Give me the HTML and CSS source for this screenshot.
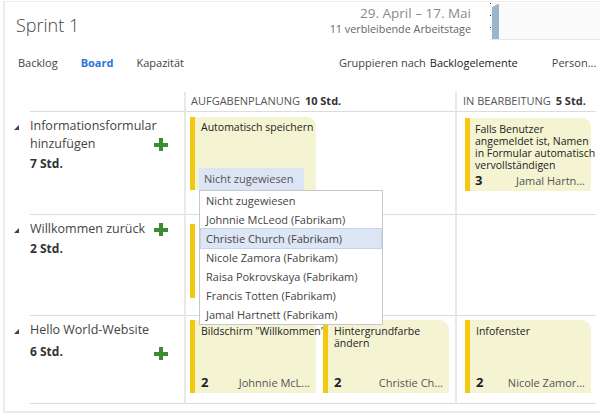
FILE: index.html
```html
<!DOCTYPE html>
<html lang="de">
<head>
<meta charset="utf-8">
<title>Sprint 1</title>
<link rel="stylesheet" href="styles.css">
</head>
<body>
<div class="frame">
  <header class="top">
    <h1 class="title">Sprint 1</h1>
    <div class="sprint-info">
      <div class="dates">
        <div class="range">29. April – 17. Mai</div>
        <div class="remaining">11 verbleibende Arbeitstage</div>
      </div>
      <div class="chart">
        <svg width="110" height="37" viewBox="0 0 110 37">
          <line x1="0.5" y1="0" x2="0.5" y2="37" stroke="#333" stroke-width="1" stroke-dasharray="1 11"/>
          <polygon points="2,37 2,4 4,3 6,2 8,1 9,1 9,37" fill="#9bb6ca"/>
          <line x1="0" y1="36.5" x2="110" y2="36.5" stroke="#e6e6e6"/>
        </svg>
      </div>
    </div>
  </header>

  <nav class="tabs">
    <div class="tab-list">
      <span class="tab">Backlog</span>
      <span class="tab active">Board</span>
      <span class="tab">Kapazität</span>
    </div>
    <div class="options">
      <span class="opt-label">Gruppieren nach</span>
      <span class="opt-value">Backlogelemente</span>
      <span class="opt-person">Person...</span>
    </div>
  </nav>

  <div class="board">
    <div class="toggle head"></div>
    <div class="lane head line"></div>
    <div class="col head line sep"><span class="col-name">Aufgabenplanung</span> <b>10 Std.</b></div>
    <div class="col head line sep col-r"><span class="col-name">In Bearbeitung</span> <b>5 Std.</b></div>

    <!-- Row 1 -->
    <div class="toggle"><span class="tri"></span></div>
    <div class="lane line">
      <div class="lane-name">Informationsformular<br>hinzufügen<span class="plus plus-inline"></span></div>
      <div class="hours">7 Std.</div>
    </div>
    <div class="col line sep cards">
      <div class="card card-edit">
        <div class="card-title">Automatisch speichern</div>
        <div class="combo">Nicht zugewiesen
          <ul class="dropdown">
            <li>Nicht zugewiesen</li>
            <li>Johnnie McLeod (Fabrikam)</li>
            <li class="hl">Christie Church (Fabrikam)</li>
            <li>Nicole Zamora (Fabrikam)</li>
            <li>Raisa Pokrovskaya (Fabrikam)</li>
            <li>Francis Totten (Fabrikam)</li>
            <li>Jamal Hartnett (Fabrikam)</li>
          </ul>
        </div>
      </div>
    </div>
    <div class="col line sep cards col-r">
      <div class="card card-r1">
        <div class="card-title">Falls Benutzer angemeldet ist, Namen in Formular automatisch vervollständigen</div>
        <div class="card-foot"><b>3</b><span class="owner">Jamal Hartn...</span></div>
      </div>
    </div>

    <!-- Row 2 -->
    <div class="toggle"><span class="tri"></span></div>
    <div class="lane line">
      <div class="lane-name">Willkommen zurück<span class="plus plus-inline"></span></div>
      <div class="hours">2 Std.</div>
    </div>
    <div class="col line sep cards">
      <div class="card card-hidden"></div>
    </div>
    <div class="col line sep col-r"></div>

    <!-- Row 3 -->
    <div class="toggle"><span class="tri"></span></div>
    <div class="lane line">
      <div class="lane-name">Hello World-Website</div>
      <div class="hours hours-3"><span class="plus"></span>6 Std.</div>
    </div>
    <div class="col line sep cards">
      <div class="card">
        <div class="card-title">Bildschirm "Willkommen"</div>
        <div class="card-foot"><b>2</b><span class="owner">Johnnie McL...</span></div>
      </div>
      <div class="card">
        <div class="card-title">Hintergrundfarbe ändern</div>
        <div class="card-foot"><b>2</b><span class="owner">Christie Ch...</span></div>
      </div>
    </div>
    <div class="col line sep cards col-r">
      <div class="card">
        <div class="card-title">Infofenster</div>
        <div class="card-foot"><b>2</b><span class="owner">Nicole Zamor...</span></div>
      </div>
    </div>
  </div>
</div>
</body>
</html>
```

FILE: styles.css
```css
* { box-sizing: border-box; }

html, body {
  margin: 0;
  padding: 0;
  background: #ffffff;
  overflow: hidden;
}

body {
  font-family: "Segoe UI", "Open Sans", "Noto Sans", sans-serif;
  color: #333;
  padding: 1px 0 0 3px;
}

.frame {
  width: 597px;
  height: 412px;
  border-top: 1px solid #ececec;
  border-left: 2px solid #ececec;
  border-bottom: 2px solid #ececec;
  background: #fff;
}

/* Header */
.top {
  display: flex;
  justify-content: space-between;
  height: 42px;
}

.title {
  margin: 0;
  padding: 11px 0 0 11px;
  font-size: 18px;
  line-height: 24px;
  font-weight: 300;
  color: #444;
}

.sprint-info {
  display: flex;
  align-items: flex-start;
}

.dates {
  text-align: right;
  margin-right: 19px;
  padding-top: 3px;
}

.range {
  font-size: 13.5px;
  line-height: 17px;
  color: #8a8a8a;
}

.remaining {
  font-size: 10.8px;
  line-height: 14px;
  color: #666;
}

.chart {
  width: 110px;
  height: 37px;
  margin-top: 1px;
  background: #fafafa;
}

.chart svg { display: block; }

/* Tabs */
.tabs {
  display: flex;
  height: 48px;
  padding-top: 11px;
  font-size: 11px;
  line-height: 16px;
  white-space: nowrap;
}

.tab-list {
  display: flex;
  gap: 23px;
  padding-left: 13px;
  width: 334px;
  flex-shrink: 0;
}

.tab { color: #444; }

.tab.active {
  color: #2b73d8;
  font-weight: 700;
}

.options {
  display: flex;
  flex-shrink: 0;
  color: #444;
}

.opt-value {
  margin-left: 4px;
  color: #222;
}

.opt-person {
  margin-left: 34px;
}

/* Board */
.board {
  display: grid;
  grid-template-columns: 25px 154px 271px 141px;
  grid-template-rows: 20px 103px 101px 88px;
}

.line { border-bottom: 1px solid #dcdcdc; }

.sep { border-left: 2px solid #e9e9e9; }

.head {
  font-size: 11px;
  line-height: 18px;
  color: #555;
  white-space: nowrap;
}

.col.head { padding-left: 5px; }
.col.head.col-r { padding-left: 6px; }

.col-name {
  text-transform: uppercase;
}

.col.head b {
  color: #333;
  margin-left: 2px;
}

.toggle {
  padding: 13px 0 0 9px;
}

.tri {
  display: block;
  width: 0;
  height: 0;
  border-left: 5px solid transparent;
  border-bottom: 5px solid #444;
}

.lane {
  padding: 5px 16px 0 0;
  color: #333;
}

.lane-name {
  font-size: 12.5px;
  line-height: 18px;
  color: #444;
}

.hours {
  font-size: 12px;
  line-height: 18px;
  font-weight: 700;
  margin-top: 2px;
  color: #333;
}

.hours-3 { margin-top: 4px; }

.plus {
  float: right;
  position: relative;
  width: 14px;
  height: 13px;
  margin-top: 4px;
}

.plus::before,
.plus::after {
  content: "";
  position: absolute;
  background: #3b8c34;
}

.plus::before {
  left: 0;
  top: 5px;
  width: 14px;
  height: 4px;
}

.plus::after {
  left: 5px;
  top: 0;
  width: 4px;
  height: 13px;
}

.plus-inline { margin-top: 3px; }

/* Cards */
.cards {
  display: flex;
  gap: 7px;
  padding: 4px 0 0 4px;
  align-items: flex-start;
}

.col-r.cards { padding-left: 8px; }

.card {
  width: 126px;
  height: 73px;
  background: #f4f4d3;
  border-left: 5px solid #f2c811;
  border-top-right-radius: 9px;
  padding: 5px 6px 3px 6px;
  display: flex;
  flex-direction: column;
  justify-content: space-between;
  font-size: 10.5px;
  line-height: 12px;
  color: #222;
}

.card-edit {
  margin-top: 1px;
  padding-top: 4px;
  padding-bottom: 0;
  justify-content: flex-start;
}

.card-r1 {
  margin-top: 2px;
  padding-left: 5px;
}

.card-hidden {
  background: transparent;
  height: 74px;
  margin-top: 5px;
}

.card-title {
  width: 124px;
  overflow: visible;
}

.card-edit .card-title {
  white-space: nowrap;
}

.card-foot {
  display: flex;
  justify-content: space-between;
  align-items: baseline;
  line-height: 15px;
}

.card-foot b {
  font-size: 13px;
  color: #222;
}

.owner {
  color: #555;
  font-size: 11px;
}

/* Combo + dropdown */
.combo {
  position: relative;
  margin-top: auto;
  margin-left: -2px;
  width: 105px;
  height: 22px;
  padding: 3px 0 0 5px;
  background: #dce5f3;
  color: #555;
  font-size: 11px;
  line-height: 16px;
}

.dropdown {
  position: absolute;
  top: 100%;
  left: 0;
  width: 184px;
  margin: 0;
  padding: 0;
  list-style: none;
  background: #fff;
  border: 1px solid #c8c8c8;
  z-index: 10;
}

.dropdown li {
  height: 19px;
  padding: 1px 0 0 5px;
  margin: 0 1px;
  font-size: 11px;
  line-height: 17px;
  color: #444;
}

.dropdown li.hl {
  background: #dde6f4;
  outline: 1px solid #c4d4eb;
}
```
